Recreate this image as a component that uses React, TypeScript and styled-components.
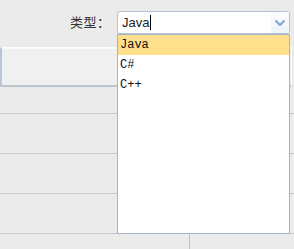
import React from "react";
import styled, { createGlobalStyle } from "styled-components";

const GlobalStyle = createGlobalStyle`
  html, body {
    margin: 0;
    padding: 0;
    background: #ecebec;
    font-family: "Noto Sans CJK SC", "Liberation Sans", sans-serif;
    overflow: hidden;
  }
`;

const languages = ["Java", "C#", "C++"];

const App = () => {
  return (
    <>
      <GlobalStyle />
      <Page>
        <Header>
          <Label>类型：</Label>
          <Combo>
            <ComboInput>
              <ComboText>Java</ComboText>
              <Caret />
            </ComboInput>
            <ArrowButton>
              <svg width="12" height="8" viewBox="0 0 12 8">
                <path
                  d="M1.5 1.5 L6 6 L10.5 1.5"
                  fill="none"
                  stroke="#7ea6cf"
                  strokeWidth="2"
                />
              </svg>
            </ArrowButton>
            <DropList>
              {languages.map((lang, idx) => (
                <DropItem key={lang} selected={idx === 0}>
                  {lang}
                </DropItem>
              ))}
            </DropList>
          </Combo>
        </Header>
        <Panel />
        <Row height={27} />
        <Row height={40} />
        <Row height={40} />
        <Row height={40} />
        <Footer>
          <FooterCell />
          <FooterCell />
        </Footer>
      </Page>
    </>
  );
};

const Page = styled("div")`
  width: 294px;
  height: 249px;
  display: flex;
  flex-direction: column;
  background: #ecebec;
`;

const Header = styled("div")`
  height: 47px;
  display: flex;
  align-items: flex-start;
  padding-top: 11px;
  box-sizing: border-box;
  padding-left: 70px;
`;

const Label = styled("span")`
  font-size: 13px;
  color: #333;
  line-height: 22px;
  width: 47px;
  letter-spacing: 0.5px;
`;

const Combo = styled("div")`
  position: relative;
  width: 173px;
  height: 23px;
  box-sizing: border-box;
  border: 1px solid #b5c3d1;
  border-radius: 3px;
  background: #fff;
  display: flex;
`;

const ComboInput = styled("div")`
  flex: 1;
  display: flex;
  align-items: center;
  padding-left: 4px;
`;

const ComboText = styled("span")`
  font-family: "Liberation Sans", Arial, sans-serif;
  font-size: 13px;
  color: #222;
`;

const Caret = styled("span")`
  width: 1px;
  height: 15px;
  background: #000;
  margin-left: 1px;
`;

const ArrowButton = styled("div")`
  width: 18px;
  display: flex;
  align-items: center;
  justify-content: center;
  background: linear-gradient(#fbfcfe, #eef3f9);
  border-radius: 0 2px 2px 0;
`;

const DropList = styled("div")`
  position: absolute;
  left: -1px;
  top: 22px;
  width: 173px;
  height: 200px;
  box-sizing: border-box;
  border: 1px solid #a4b4c6;
  background: #fff;
  z-index: 2;
`;

const DropItem = styled("div")<{ selected?: boolean }>`
  height: 20px;
  line-height: 20px;
  padding-left: 2px;
  font-family: "Liberation Mono", "Courier New", monospace;
  font-size: 12px;
  color: #111;
  background: ${(p) => (p.selected ? "#fedf8c" : "transparent")};
`;

const Panel = styled("div")`
  height: 40px;
  margin-right: 2px;
  box-sizing: border-box;
  background: #f1f0f1;
  border: 1px solid #fff;
  border-left: 2px solid #b8c6d8;
  border-bottom: 2px solid #bcc4ce;
  box-shadow: inset 0 1px 0 #fafafa;
`;

const Row = styled("div")<{ height: number }>`
  height: ${(p) => p.height}px;
  box-sizing: border-box;
  border-bottom: 1px solid #c9c8c9;
`;

const Footer = styled("div")`
  flex: 1;
  display: grid;
  grid-template-columns: 190px 1fr;
`;

const FooterCell = styled("div")`
  &:first-child {
    border-right: 1px solid #c4c3c4;
  }
`;

export default App;
